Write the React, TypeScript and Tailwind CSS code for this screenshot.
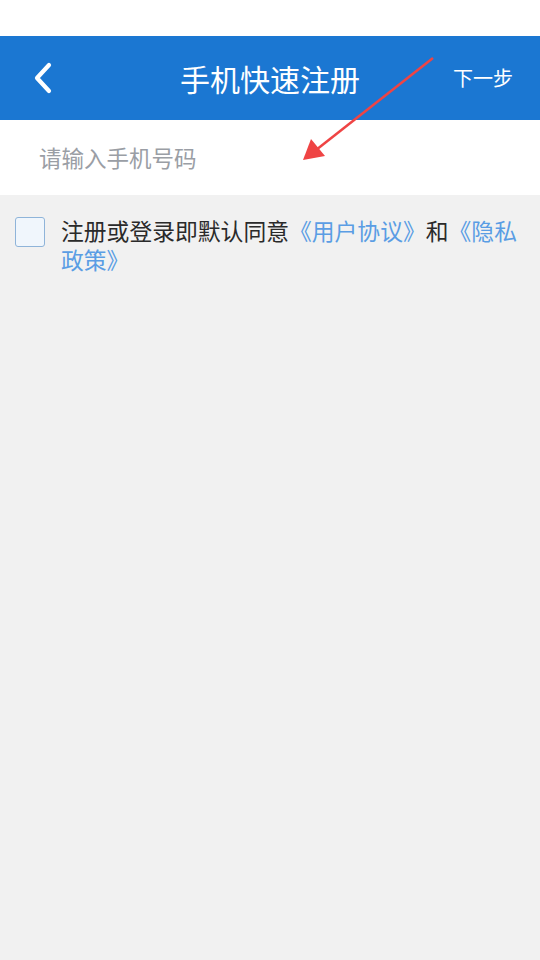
import React from 'react';

const font = { fontFamily: '"Noto Sans CJK SC", "Noto Sans", sans-serif' };

export default function App() {
  return (
    <div className="relative w-[540px] h-[960px] bg-[#f1f1f1] overflow-hidden" style={font}>
      {/* status bar */}
      <div className="h-[36px] bg-white" />

      {/* header */}
      <div className="h-[84px] bg-[#1b77d2] flex items-center px-[30px] relative">
        <svg width="24" height="32" viewBox="0 0 24 32" className="ml-[1px]">
          <path d="M18 3 L6 16 L18 29" stroke="white" strokeWidth="4.2" fill="none" strokeLinecap="round" strokeLinejoin="round" />
        </svg>
        <div className="absolute inset-0 flex items-center justify-center text-white text-[30px] leading-none">
          手机快速注册
        </div>
        <div className="ml-auto text-white text-[20px] leading-none mr-[-3px]">下一步</div>
      </div>

      {/* input */}
      <div className="h-[75px] bg-white flex items-center px-[39px]">
        <input
          className="w-full bg-transparent outline-none text-[22.5px] text-[#333] placeholder:text-[#9a9ea5]"
          placeholder="请输入手机号码"
          style={font}
        />
      </div>

      {/* agreement */}
      <div className="flex items-start pl-[15px] pr-[14px] pt-[22px]">
        <div className="w-[30px] h-[30px] shrink-0 rounded-[3px] border border-[#8fb4d9] bg-[#f0f6fc]" />
        <p className="ml-[16px] text-[22.8px] leading-[29px] text-[#2a2a2a] mt-[-1px]">
          注册或登录即默认同意<span className="text-[#5a9de4]">《用户协议》</span>和<span className="text-[#5a9de4]">《隐私政策》</span>
        </p>
      </div>

      {/* annotation arrow */}
      <svg className="absolute left-0 top-0 pointer-events-none" width="540" height="960">
        <line x1="433" y1="58" x2="316" y2="150" stroke="#ef4444" strokeWidth="2.5" />
        <polygon points="303,160 311,139 325,156" fill="#ef4444" />
      </svg>
    </div>
  );
}
